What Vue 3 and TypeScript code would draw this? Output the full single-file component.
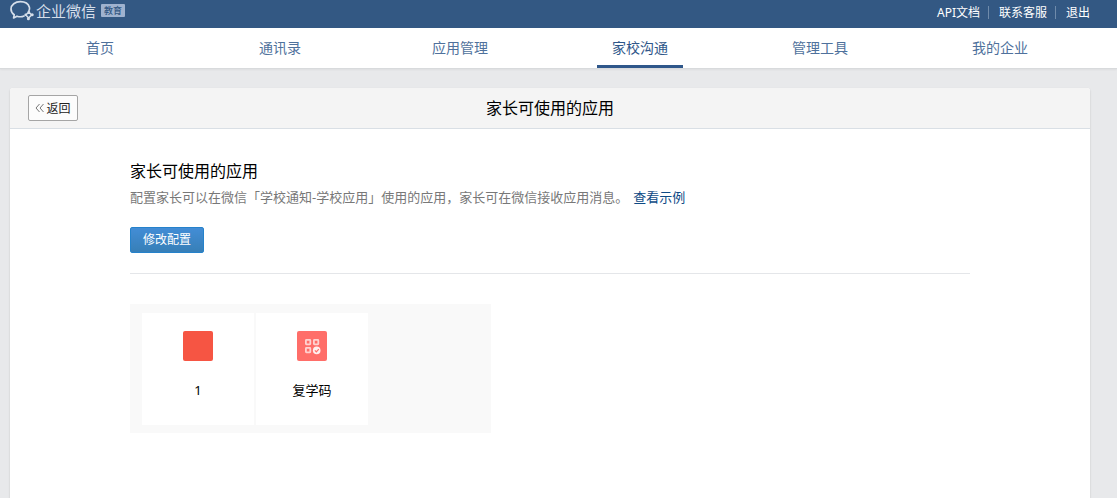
<script setup lang="ts">
interface AppItem {
  name: string
  kind: 'plain' | 'code'
}

const navItems: string[] = ['首页', '通讯录', '应用管理', '家校沟通', '管理工具', '我的企业']
const activeNav = '家校沟通'
const userLinks: string[] = ['API文档', '联系客服', '退出']
const apps: AppItem[] = [
  { name: '1', kind: 'plain' },
  { name: '复学码', kind: 'code' },
]
</script>

<template>
  <div class="page">
    <header class="topbar">
      <div class="wrap topbar-inner">
        <a class="brand" href="#">
          <svg class="brand-mark" width="24" height="22" viewBox="0 0 24 22" fill="none" stroke="#d5deea" stroke-width="1.7" stroke-linecap="round" stroke-linejoin="round" aria-hidden="true">
            <path d="M19 10.6C19.7 9.6 19.7 8.4 19.4 7.2C18.4 3.8 14.8 1.6 10.4 1.6C5.2 1.6 1 4.8 1 9C1 11.4 2.2 13.4 4.2 14.8L3.6 18L7 16.2C9.2 16.9 12 16.9 14 16" />
            <path d="M18.8 12L21.6 15L18.6 18L15.8 15Z" stroke-width="1.5" />
            <g fill="#d5deea" stroke="none">
              <circle cx="18.8" cy="12" r="1.3" />
              <circle cx="22.2" cy="14.8" r="1.5" />
              <circle cx="18.4" cy="18.8" r="1.5" />
              <circle cx="15.6" cy="14.8" r="1.2" />
            </g>
          </svg>
          <span class="brand-name">企业微信</span>
          <span class="brand-tag">教育</span>
        </a>
        <div class="user-links">
          <a v-for="link in userLinks" :key="link" href="#">{{ link }}</a>
        </div>
      </div>
    </header>

    <nav class="nav">
      <div class="wrap nav-inner">
        <div v-for="item in navItems" :key="item" class="nav-cell">
          <a href="#" :class="['nav-link', { active: item === activeNav }]">{{ item }}</a>
        </div>
      </div>
    </nav>

    <main class="wrap main">
      <section class="panel">
        <div class="panel-head">
          <button class="back" type="button">
            <svg width="9" height="10" viewBox="0 0 9 10" fill="none" stroke="#777" stroke-width="1" aria-hidden="true">
              <path d="M4.5 1L1 5L4.5 9M8.5 1L5 5L8.5 9" />
            </svg>
            返回
          </button>
          <h1 class="panel-title">家长可使用的应用</h1>
        </div>
        <div class="panel-body">
          <h2 class="title">家长可使用的应用</h2>
          <p class="desc">配置家长可以在微信「学校通知-学校应用」使用的应用，家长可在微信接收应用消息。<a href="#">查看示例</a></p>
          <button class="primary" type="button">修改配置</button>
          <hr class="rule" />
          <ul class="apps">
            <li v-for="app in apps" :key="app.name" class="app">
              <svg class="app-icon" width="30" height="30" viewBox="0 0 30 30" aria-hidden="true">
                <rect v-if="app.kind === 'plain'" width="30" height="30" rx="2" fill="#f65543" />
                <template v-else>
                  <rect width="30" height="30" rx="2" fill="#ff6e69" />
                  <g fill="none" stroke="#ffd2d0" stroke-width="1.8">
                    <rect x="8.9" y="8.9" width="4.4" height="4.4" rx="0.5" />
                    <rect x="16.9" y="8.9" width="4.4" height="4.4" rx="0.5" />
                    <rect x="8.9" y="16.9" width="4.4" height="4.4" rx="0.5" />
                  </g>
                  <circle cx="19.7" cy="19.4" r="3.8" fill="#fff0ef" />
                  <path d="M17.9 19.4L19.3 20.8L21.8 18.1" fill="none" stroke="#ff6e69" stroke-width="1.2" />
                </template>
              </svg>
              <span class="app-name">{{ app.name }}</span>
            </li>
          </ul>
        </div>
      </section>
    </main>
  </div>
</template>

<style>
html,
body {
  min-height: 100%;
  background: #e8e9eb;
}
</style>

<style scoped>
.page {
  display: flex;
  flex-direction: column;
  min-height: 100vh;
  color: #000;
  font-family: "Noto Sans", "Noto Sans CJK SC", sans-serif;
  font-size: 13px;
}
.page a {
  text-decoration: none;
}
.page button {
  font-family: inherit;
  cursor: pointer;
}
.wrap {
  box-sizing: border-box;
  width: 100%;
  padding: 0 27px 0 10px;
}
.topbar {
  background: #335883;
}
.topbar-inner {
  display: flex;
  justify-content: space-between;
  height: 28px;
}
.brand {
  display: flex;
  align-items: center;
  height: 21px;
  color: #d5deea;
}
.brand-mark {
  margin-right: 2px;
}
.brand-name {
  font-size: 15px;
  line-height: 20px;
}
.brand-tag {
  width: 24px;
  height: 13px;
  margin-left: 5px;
  border-radius: 1px;
  background: #9fb2cf;
  color: #335883;
  font-size: 9px;
  font-weight: 500;
  line-height: 13px;
  text-align: center;
}
.user-links {
  display: flex;
  align-items: center;
  height: 24px;
  font-size: 12px;
  line-height: 13px;
}
.user-links a {
  color: #fff;
}
.user-links a + a {
  margin-left: 8px;
  padding-left: 10px;
  border-left: 1px solid #6f8bab;
}
.nav {
  background: #fff;
  border-bottom: 1px solid #d8dadc;
  box-shadow: 0 1px 2px rgba(0, 0, 0, 0.05);
}
.nav-inner {
  display: flex;
}
.nav-cell {
  display: flex;
  flex: 1;
  justify-content: center;
}
.nav-link {
  box-sizing: border-box;
  height: 40px;
  padding: 0 15px;
  border-bottom: 3px solid transparent;
  color: #4f719c;
  font-size: 14px;
  line-height: 40px;
}
.nav-link.active {
  border-color: #2f578a;
  color: #2f578a;
}
.main {
  display: flex;
  flex: 1;
  padding-top: 19px;
}
.panel {
  flex: 1;
  border-radius: 3px 3px 0 0;
  background: #fff;
  box-shadow: 0 1px 2px rgba(0, 0, 0, 0.18);
}
.panel-head {
  display: grid;
  grid-template-columns: 1fr auto 1fr;
  align-items: center;
  height: 40px;
  padding: 0 18px;
  border-bottom: 1px solid #d9dfe5;
  border-radius: 3px 3px 0 0;
  background: #f4f4f4;
}
.back {
  display: flex;
  align-items: center;
  justify-content: center;
  justify-self: start;
  gap: 2px;
  box-sizing: border-box;
  width: 50px;
  height: 26px;
  padding: 0;
  border: 1px solid #a5a5a5;
  border-radius: 2px;
  background: #fcfcfc;
  color: #222;
  font-size: 12px;
}
.panel-title {
  margin: 0;
  font-size: 16px;
  font-weight: 400;
  line-height: 24px;
}
.panel-body {
  padding: 30px 120px;
}
.title {
  margin: 0;
  font-size: 16px;
  font-weight: 400;
  line-height: 24px;
}
.desc {
  margin: 4px 0 20px;
  color: #787878;
  line-height: 20px;
}
.desc a {
  margin-left: 5px;
  color: #0d4a85;
}
.primary {
  display: block;
  height: 26px;
  padding: 0 12px;
  border: 1px solid #2582cb;
  border-radius: 2px;
  background: linear-gradient(#438dd6, #377fb7);
  color: #fff;
  font-size: 12px;
  line-height: 24px;
}
.rule {
  height: 1px;
  margin: 20px 0 30px;
  border: 0;
  background: #e4e6e9;
}
.apps {
  display: flex;
  gap: 2px;
  box-sizing: border-box;
  max-width: 361px;
  margin: 0;
  padding: 9px 12px 8px;
  background: #f9f9f9;
  list-style: none;
}
.app {
  display: flex;
  flex-direction: column;
  align-items: center;
  gap: 19px;
  box-sizing: border-box;
  width: 112px;
  height: 112px;
  padding-top: 18px;
  background: #fff;
}
.app-icon {
  display: block;
}
.app-name {
  line-height: 20px;
}
</style>
